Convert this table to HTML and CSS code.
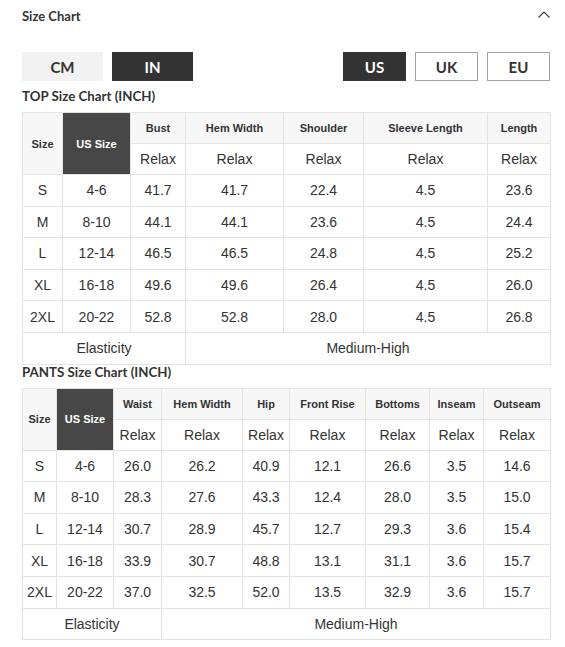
FILE: index.html
```html
<!DOCTYPE html>
<html lang="en">
<head>
    <meta charset="UTF-8">
    <meta name="viewport" content="width=device-width, initial-scale=1.0">
    <title>Size Chart</title>
    <link rel="stylesheet" href="styles.css">
</head>
<body>

    <div class="chart-header">
        <span class="chart-heading">Size Chart</span>
        <svg class="chevron" width="12" height="7" viewBox="0 0 12 7">
            <polyline points="0.5,6.5 6,1 11.5,6.5" fill="none" stroke="#333" stroke-width="1.1"/>
        </svg>
    </div>

    <div class="switch-row">
        <div class="switch-group">
            <button class="unit-btn">CM</button>
            <button class="unit-btn active">IN</button>
        </div>
        <div class="switch-group">
            <button class="region-btn active">US</button>
            <button class="region-btn">UK</button>
            <button class="region-btn">EU</button>
        </div>
    </div>

    <h3 class="chart-title">TOP Size Chart (INCH)</h3>
    <table class="size-table">
        <colgroup>
            <col style="width:40px"><col style="width:68px"><col style="width:55px"><col style="width:98px">
            <col style="width:80px"><col style="width:124px"><col style="width:63px">
        </colgroup>
        <tr class="head-row">
            <th rowspan="2">Size</th>
            <th rowspan="2" class="dark">US Size</th>
            <th>Bust</th>
            <th>Hem Width</th>
            <th>Shoulder</th>
            <th>Sleeve Length</th>
            <th>Length</th>
        </tr>
        <tr class="head-row">
            <td>Relax</td><td>Relax</td><td>Relax</td><td>Relax</td><td>Relax</td>
        </tr>
        <tr><td>S</td><td>4-6</td><td>41.7</td><td>41.7</td><td>22.4</td><td>4.5</td><td>23.6</td></tr>
        <tr><td>M</td><td>8-10</td><td>44.1</td><td>44.1</td><td>23.6</td><td>4.5</td><td>24.4</td></tr>
        <tr><td>L</td><td>12-14</td><td>46.5</td><td>46.5</td><td>24.8</td><td>4.5</td><td>25.2</td></tr>
        <tr><td>XL</td><td>16-18</td><td>49.6</td><td>49.6</td><td>26.4</td><td>4.5</td><td>26.0</td></tr>
        <tr><td>2XL</td><td>20-22</td><td>52.8</td><td>52.8</td><td>28.0</td><td>4.5</td><td>26.8</td></tr>
        <tr><td colspan="3">Elasticity</td><td colspan="4">Medium-High</td></tr>
    </table>

    <h3 class="chart-title">PANTS Size Chart (INCH)</h3>
    <table class="size-table">
        <colgroup>
            <col style="width:34px"><col style="width:57px"><col style="width:48px"><col style="width:81px">
            <col style="width:47px"><col style="width:76px"><col style="width:64px"><col style="width:54px">
            <col style="width:67px">
        </colgroup>
        <tr class="head-row">
            <th rowspan="2">Size</th>
            <th rowspan="2" class="dark">US Size</th>
            <th>Waist</th>
            <th>Hem Width</th>
            <th>Hip</th>
            <th>Front Rise</th>
            <th>Bottoms</th>
            <th>Inseam</th>
            <th>Outseam</th>
        </tr>
        <tr class="head-row">
            <td>Relax</td><td>Relax</td><td>Relax</td><td>Relax</td><td>Relax</td><td>Relax</td><td>Relax</td>
        </tr>
        <tr><td>S</td><td>4-6</td><td>26.0</td><td>26.2</td><td>40.9</td><td>12.1</td><td>26.6</td><td>3.5</td><td>14.6</td></tr>
        <tr><td>M</td><td>8-10</td><td>28.3</td><td>27.6</td><td>43.3</td><td>12.4</td><td>28.0</td><td>3.5</td><td>15.0</td></tr>
        <tr><td>L</td><td>12-14</td><td>30.7</td><td>28.9</td><td>45.7</td><td>12.7</td><td>29.3</td><td>3.6</td><td>15.4</td></tr>
        <tr><td>XL</td><td>16-18</td><td>33.9</td><td>30.7</td><td>48.8</td><td>13.1</td><td>31.1</td><td>3.6</td><td>15.7</td></tr>
        <tr><td>2XL</td><td>20-22</td><td>37.0</td><td>32.5</td><td>52.0</td><td>13.5</td><td>32.9</td><td>3.6</td><td>15.7</td></tr>
        <tr><td colspan="3">Elasticity</td><td colspan="6">Medium-High</td></tr>
    </table>

</body>
</html>
```

FILE: styles.css
```css
body {
    font-family: Lato, "Open Sans", sans-serif;
    color: #333;
    background: #fff;
    margin: 0;
    padding: 0 15px 0 22px;
}
.chart-header {
    display: flex;
    align-items: center;
    justify-content: space-between;
    height: 32px;
    margin-bottom: 20px;
}
.chart-heading {
    font-size: 13px;
    font-weight: 700;
}
.chevron {
    display: block;
    margin-top: -3px;
}
.switch-row {
    display: flex;
    justify-content: space-between;
    margin-bottom: 8px;
}
.switch-group {
    display: flex;
    gap: 9px;
}
button {
    font-family: Lato, "Open Sans", sans-serif;
    font-size: 15px;
    font-weight: 700;
    color: #333;
    height: 29px;
    padding: 0;
    cursor: pointer;
}
.unit-btn {
    width: 81px;
    border: none;
    background: #f2f2f2;
}
.region-btn {
    width: 63px;
    border: 1px solid #a3a3a3;
    background: #fff;
}
button.active {
    background: #333;
    border-color: #333;
    color: #fff;
}
.chart-title {
    font-size: 13.3px;
    font-weight: 700;
    line-height: 15px;
    margin: 0 0 8px;
}
.size-table {
    width: 528px;
    table-layout: fixed;
    border-collapse: collapse;
    font-family: "Liberation Sans", Arial, sans-serif;
    font-size: 14px;
    color: #333;
}
.size-table td,
.size-table th {
    border: 1px solid #e3e3e3;
    padding: 0;
    text-align: center;
    vertical-align: middle;
}
.size-table tr {
    height: 31.6px;
}
.size-table tr.head-row {
    height: 31px;
}
.size-table th {
    background: #f7f7f7;
    font-size: 11px;
    font-weight: 700;
}
.size-table th.dark {
    background: #474747;
    color: #fff;
}
```
